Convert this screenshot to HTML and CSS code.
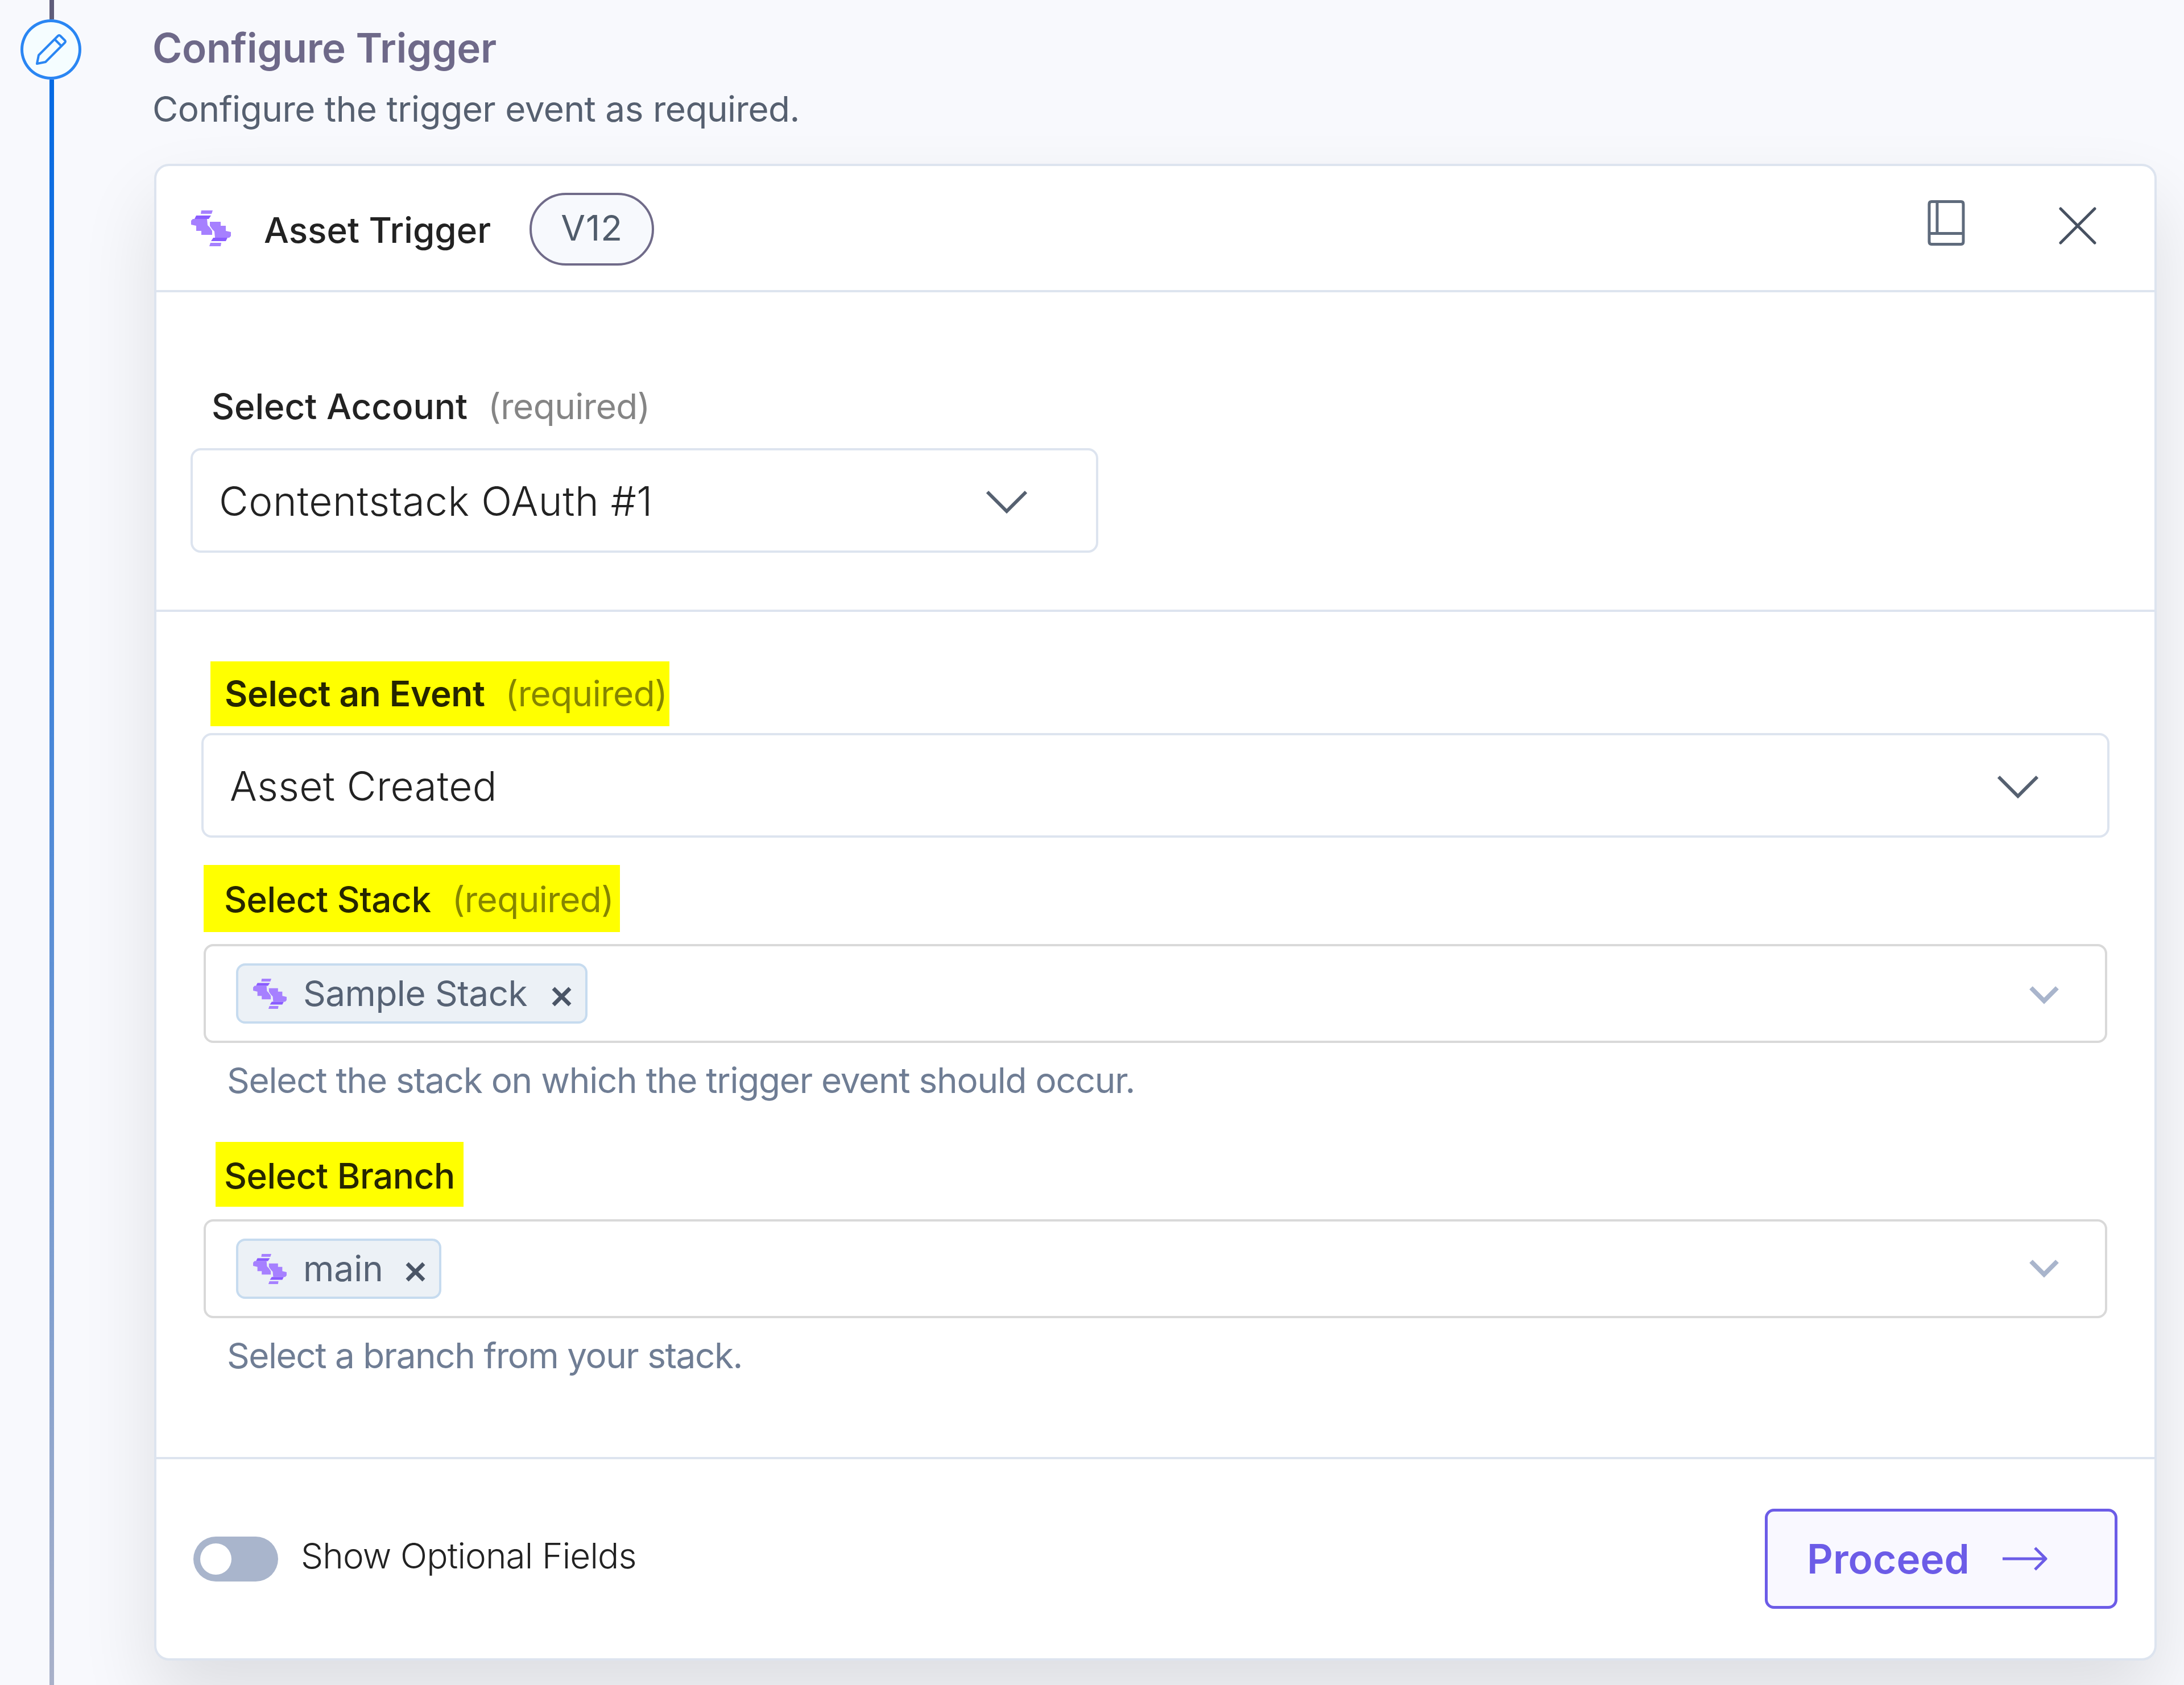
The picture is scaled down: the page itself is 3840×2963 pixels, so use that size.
FILE: index.html
```html
<!DOCTYPE html>
<html lang="en">

<head>
    <meta charset="UTF-8">
    <meta name="viewport" content="width=device-width, initial-scale=1.0">
    <title>Configure Trigger</title>
    <link rel="stylesheet" href="styles.css">
</head>

<body>
    <!-- Contentstack mark, reused by the header and the tags -->
    <svg class="sprite" width="0" height="0">
        <symbol id="logo" viewBox="0 0 70 63">
            <g id="logo-half">
                <path fill="#a680ff" d="M18 0h20l-2 6H17zM3 15H28L29 26L33 30L37 36V43H18V36H9V27L0 25V18z" />
                <path fill="#8a5cff" d="M9 9h26l-4 6H6z" />
            </g>
            <use href="#logo-half" transform="rotate(180 35 31.5)" />
        </symbol>
    </svg>

    <div class="page">
        <div class="rail">
            <div class="rail-line rail-line-top"></div>
            <div class="rail-step">
                <svg width="58" height="58" viewBox="0 0 58 58" fill="none" stroke="#2a86f3" stroke-width="4" stroke-linejoin="round">
                    <path d="M4 54L7 39L41 5Q43 3 45 5L53 13Q55 15 53 17L19 51Z" />
                    <path d="M35 11L47 23" />
                </svg>
            </div>
            <div class="rail-line rail-line-bottom"></div>
        </div>

        <div class="content">
            <h1 class="title">Configure Trigger</h1>
            <p class="subtitle">Configure the trigger event as required.</p>

            <div class="card">
                <div class="card-header">
                    <svg class="header-logo" width="70" height="63"><use href="#logo" /></svg>
                    <span class="header-name">Asset Trigger</span>
                    <span class="version">V12</span>
                    <div class="header-actions">
                        <svg width="66" height="80" viewBox="0 0 66 80" fill="none" stroke="#5f6b7c" stroke-width="5">
                            <path d="M7 2.5H59Q63 2.5 63 7V73Q63 77.500 59 77.500H7Q3 77.500 3 73V7Q3 2.500 7 2.500Z" />
                            <path d="M17 3V58M3 58.500H63" />
                        </svg>
                        <svg class="close" width="66" height="66" viewBox="0 0 66 66" fill="none" stroke="#475161" stroke-width="5" stroke-linecap="round">
                            <path d="M3 3L63 63M63 3L3 63" />
                        </svg>
                    </div>
                </div>

                <div class="account">
                    <div class="label">Select Account<span class="required">(required)</span></div>
                    <div class="select account-select">
                        <span class="account-value">Contentstack OAuth #1</span>
                        <svg class="chevron" width="72" height="42" viewBox="0 0 72 42" fill="none" stroke="#556070" stroke-width="6">
                            <path d="M2 3L36 37L70 3" />
                        </svg>
                    </div>
                </div>

                <div class="fields">
                    <div class="label highlight label-event">Select an Event<span class="required">(required)</span></div>
                    <div class="select event-select">
                        <span class="event-value">Asset Created</span>
                        <svg class="chevron" width="72" height="42" viewBox="0 0 72 42" fill="none" stroke="#556070" stroke-width="6">
                            <path d="M2 3L36 37L70 3" />
                        </svg>
                    </div>

                    <div class="label highlight label-stack">Select Stack<span class="required">(required)</span></div>
                    <div class="multi">
                        <span class="tag">
                            <svg width="59" height="53"><use href="#logo" /></svg>
                            <span class="tag-stack">Sample Stack</span>
                            <svg class="tag-x" width="35" height="35" viewBox="0 0 35 35" stroke="#4a5566" stroke-width="7">
                                <path d="M3 3L32 32M32 3L3 32" />
                            </svg>
                        </span>
                        <svg class="chevron-small" width="52" height="34" viewBox="0 0 52 34" fill="none" stroke="#a9b5cc" stroke-width="8">
                            <path d="M3 4L26 27L49 4" />
                        </svg>
                    </div>
                    <p class="help help-stack">Select the stack on which the trigger event should occur.</p>

                    <div class="label highlight label-branch">Select Branch</div>
                    <div class="multi">
                        <span class="tag">
                            <svg width="59" height="53"><use href="#logo" /></svg>
                            <span>main</span>
                            <svg class="tag-x" width="35" height="35" viewBox="0 0 35 35" stroke="#4a5566" stroke-width="7">
                                <path d="M3 3L32 32M32 3L3 32" />
                            </svg>
                        </span>
                        <svg class="chevron-small chevron-branch" width="52" height="34" viewBox="0 0 52 34" fill="none" stroke="#a9b5cc" stroke-width="8">
                            <path d="M3 4L26 27L49 4" />
                        </svg>
                    </div>
                    <p class="help help-branch">Select a branch from your stack.</p>
                </div>

                <div class="card-footer">
                    <span class="toggle"><span class="knob"></span></span>
                    <span class="toggle-label">Show Optional Fields</span>
                    <button class="proceed">
                        <span>Proceed</span>
                        <svg width="80" height="42" viewBox="0 0 80 42" fill="none" stroke="#6c5ce7" stroke-width="5" stroke-linejoin="round">
                            <path d="M0 21H76M57 2L76 21L57 40" />
                        </svg>
                    </button>
                </div>
            </div>
        </div>
    </div>
</body>

</html>
```
FILE: styles.css
```css
* {
    box-sizing: border-box;
}

body {
    margin: 0;
    background-color: #f8f9fd;
    font-family: Inter, sans-serif;
    font-size: 62px;
    line-height: 80px;
    color: #222;
}

.sprite {
    display: block;
}

.page {
    display: flex;
    height: 2963px;
    overflow: hidden;
}

/* Step rail */
.rail {
    display: flex;
    flex-direction: column;
    flex: none;
    width: 271px;
    padding-left: 36px;
}

.rail-line {
    width: 8px;
    margin-left: 51px;
}

.rail-line-top {
    height: 34px;
    background-color: #5f5c7a;
}

.rail-line-bottom {
    flex: 1;
    background: linear-gradient(#0469e3, #a9b1c9);
}

.rail-step {
    display: flex;
    align-items: center;
    justify-content: center;
    width: 107px;
    height: 106px;
    border: 5px solid #2a86f3;
    border-radius: 50%;
    background-color: #f5fdff;
}

/* Content */
.content {
    flex: none;
    width: 3521px;
    padding-top: 42px;
}

.title {
    margin: 0 0 26px -3px;
    font-size: 71px;
    line-height: 84px;
    font-weight: 600;
    letter-spacing: -0.25px;
    color: #6e6989;
}

.subtitle {
    margin: 0 0 56px -3px;
    letter-spacing: -0.48px;
    color: #566070;
}

.card {
    height: 2632px;
    border: 4px solid #dde4ef;
    border-radius: 26px;
    background-color: #fff;
    box-shadow: 0 66px 133px rgba(0, 0, 0, 0.11);
}

.card-header {
    display: flex;
    align-items: center;
    height: 222px;
    padding: 0 102px 0 61px;
    border-bottom: 4px solid #dde4ef;
}

.header-logo {
    margin-right: 58px;
}

.header-name {
    padding-top: 7px;
    font-weight: 500;
}

.version {
    width: 219px;
    height: 128px;
    margin-left: 68px;
    margin-top: 3px;
    border: 4px solid #706b89;
    border-radius: 64px;
    background-color: #f7f9fd;
    line-height: 116px;
    text-align: center;
    letter-spacing: 1px;
    color: #505c6b;
}

.header-actions {
    display: flex;
    align-items: center;
    gap: 165px;
    margin-left: auto;
    margin-top: -18px;
}

.close {
    margin-top: 9px;
}

/* Fields */
.label {
    font-weight: 500;
}

.required {
    margin-left: 36px;
    font-weight: 400;
    letter-spacing: -0.5px;
    color: #858585;
}

.select {
    display: flex;
    align-items: center;
    justify-content: space-between;
    height: 184px;
    padding: 0 121px 0 46px;
    border: 4px solid #dde4ef;
    border-radius: 18px;
    font-size: 71px;
    font-weight: 300;
}

.chevron {
    margin-top: 6px;
}

.account {
    height: 562px;
    padding: 161px 0 0 60px;
    border-bottom: 4px solid #dde4ef;
}

.account .label {
    margin-left: 37px;
}

.account-select {
    width: 1596px;
    margin-top: 33px;
}

.account-value {
    padding-top: 2px;
    letter-spacing: 0.55px;
}

.fields {
    height: 1490px;
    padding: 87px 79px 0;
    border-bottom: 4px solid #dde4ef;
}

.highlight {
    background-color: #ff0;
    color: #262600;
}

.highlight .required {
    color: #858500;
}

.label-event {
    width: 807px;
    margin-left: 16px;
    padding-left: 25px;
    font-weight: 600;
    line-height: 114px;
    letter-spacing: -0.29px;
}

.event-select {
    margin-top: 12px;
}

.event-value {
    padding-top: 2px;
    letter-spacing: 0.4px;
}

.label-stack {
    width: 732px;
    height: 118px;
    margin: 48px 0 21px 4px;
    padding: 2px 0 0 36px;
    line-height: 118px;
    letter-spacing: -0.45px;
}

.label-stack .required {
    margin-left: 37px;
}

.label-branch {
    width: 436px;
    height: 114px;
    margin: 69px 0 22px 25px;
    padding: 6px 0 0 15px;
    line-height: 108px;
    letter-spacing: -0.47px;
}

.multi {
    display: flex;
    align-items: center;
    justify-content: space-between;
    height: 174px;
    margin: 0 4px;
    padding: 0 81px 0 53px;
    border: 4px solid #d9d9d9;
    border-radius: 17px;
}

.tag {
    display: flex;
    align-items: center;
    height: 106px;
    padding: 0 24px 0 26px;
    border: 4px solid #c6dbef;
    border-radius: 16px;
    background-color: #ecf1f6;
    color: #566274;
}

.tag span {
    margin: 0 39px 0 29px;
}

.tag .tag-stack {
    letter-spacing: -0.5px;
    margin-right: 43px;
}

.tag-x {
    margin-top: 10px;
}

.chevron-small {
    margin-top: 5px;
}

.chevron-branch {
    margin-top: -1px;
}

.help {
    margin: 26px 0 0 45px;
    letter-spacing: -1.24px;
    color: #6f7d94;
}

.help-stack {
    margin-bottom: 68px;
}

.help-stack + .label-branch {
    margin-top: 0;
}

.help-branch {
    letter-spacing: -1.46px;
}

/* Footer */
.card-footer {
    display: flex;
    align-items: center;
    height: 350px;
    padding: 0 65px;
}

.toggle {
    width: 149px;
    height: 79px;
    padding: 12px;
    border-radius: 40px;
    background-color: #a9b5cc;
}

.knob {
    display: block;
    width: 55px;
    height: 55px;
    border-radius: 50%;
    background-color: #fff;
}

.toggle-label {
    margin: -10px 0 0 40px;
    font-weight: 300;
    letter-spacing: -0.84px;
}

.proceed {
    display: flex;
    align-items: center;
    width: 620px;
    height: 176px;
    margin-left: auto;
    padding: 0 0 0 69px;
    border: 5px solid #6c5ce7;
    border-radius: 16px;
    background-color: #f9f8ff;
    color: #6c5ce7;
    font-family: inherit;
    font-size: 71px;
    font-weight: 600;
    letter-spacing: 0.1px;
}

.proceed svg {
    margin-left: 58px;
}
```
